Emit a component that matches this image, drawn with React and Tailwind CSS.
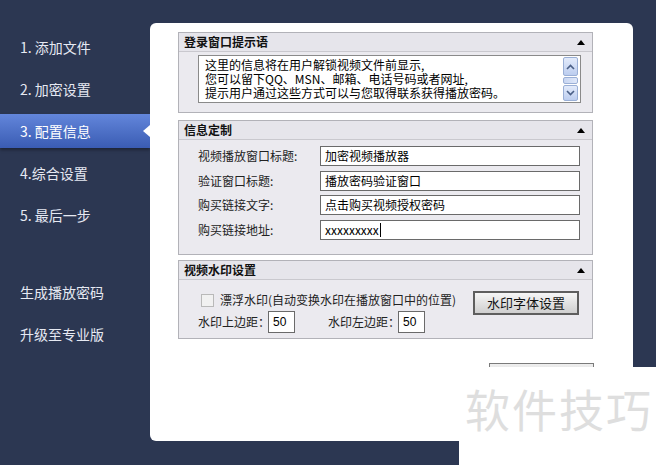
import React from "react";

const font = { fontFamily: '"Noto Sans CJK SC", "Liberation Sans", sans-serif' };

function NavItem({ label, active }) {
  if (active) {
    return (
      <div className="h-[34px] mb-[8px] flex items-center justify-between bg-gradient-to-b from-[#6386db] to-[#3a5cb3] shadow-[0_2px_3px_rgba(0,0,0,0.35)]">
        <span className="pl-[20px] text-[14px] text-white">{label}</span>
        <span className="w-0 h-0 border-y-[6px] border-y-transparent border-r-[7px] border-r-white" />
      </div>
    );
  }
  return (
    <div className="h-[34px] mb-[8px] flex items-center">
      <span className="pl-[20px] text-[14px] text-[#e6e9f2]">{label}</span>
    </div>
  );
}

function Section({ title, children, className = "" }) {
  return (
    <div className={"border border-[#b2b2b8] bg-[#ebeaef] " + className}>
      <div className="h-[19px] flex items-center justify-between px-[5px] bg-[#e6e5eb] border-b border-[#c9c8ce]">
        <span className="text-[12px] font-bold text-[#111]">{title}</span>
        <span className="w-0 h-0 border-x-[4px] border-x-transparent border-b-[5px] border-b-black mr-[2px]" />
      </div>
      {children}
    </div>
  );
}

function Field({ label, value, caret }) {
  return (
    <div className="flex items-center h-[20px]">
      <span className="w-[122px] text-[12px] text-[#222]">{label}</span>
      <div className="w-[260px] h-[20px] border border-[#6a6a6a] bg-white flex items-center pl-[4px] text-[12px] text-black">
        {value}
        {caret && <span className="inline-block w-[1px] h-[14px] bg-black ml-[1px]" />}
      </div>
    </div>
  );
}

function Chevron({ up }) {
  return (
    <svg width="9" height="6" viewBox="0 0 9 6">
      <path d={up ? "M1 5 L4.5 1.5 L8 5" : "M1 1 L4.5 4.5 L8 1"} fill="none" stroke="#4a5f86" strokeWidth="1.6" />
    </svg>
  );
}

export default function App() {
  return (
    <div className="w-[656px] h-[465px] bg-[#2c3752] flex relative overflow-hidden" style={font}>
      <div className="w-[150px] pt-[30px] flex flex-col">
        <NavItem label="1. 添加文件" />
        <NavItem label="2. 加密设置" />
        <NavItem label="3. 配置信息" active />
        <NavItem label="4.综合设置" />
        <NavItem label="5. 最后一步" />
        <div className="h-[35px]" />
        <NavItem label="生成播放密码" />
        <NavItem label="升级至专业版" />
      </div>

      <div className="mt-[23px] w-[483px] h-[418px] bg-white rounded-[6px] pl-[28px] pr-[40px] pt-[9px] flex flex-col">
        <Section title="登录窗口提示语" className="h-[81px]">
          <div className="pl-[19px] pr-[11px] pt-[3px]">
            <div className="h-[48px] border border-[#8a8a8a] bg-white flex">
              <div className="flex-1 pl-[6px] pt-[2px] text-[12px] leading-[14px] text-black">
                <div className="h-[14px]">这里的信息将在用户解锁视频文件前显示,</div>
                <div className="h-[14px]">您可以留下QQ、MSN、邮箱、电话号码或者网址,</div>
                <div className="h-[14px]">提示用户通过这些方式可以与您取得联系获得播放密码。</div>
              </div>
              <div className="w-[17px] flex flex-col items-center py-[1px] mr-[1px]">
                <div className="w-[15px] h-[19px] border border-[#9aafd6] rounded-[2px] bg-gradient-to-b from-[#e3ebfb] to-[#bccdef] flex items-center justify-center">
                  <Chevron up />
                </div>
                <div className="w-[15px] h-[7px] mt-[1px] border border-[#9aafd6] rounded-[2px] bg-gradient-to-r from-[#c8d6f2] to-[#dfe8fa]" />
                <div className="flex-1" />
                <div className="w-[15px] h-[16px] border border-[#9aafd6] rounded-[2px] bg-gradient-to-b from-[#e3ebfb] to-[#bccdef] flex items-center justify-center">
                  <Chevron />
                </div>
              </div>
            </div>
          </div>
        </Section>

        <Section title="信息定制" className="mt-[7px] h-[135px]">
          <div className="pl-[19px] pt-[6px] flex flex-col gap-[4.5px]">
            <Field label="视频播放窗口标题:" value="加密视频播放器" />
            <Field label="验证窗口标题:" value="播放密码验证窗口" />
            <Field label="购买链接文字:" value="点击购买视频授权密码" />
            <Field label="购买链接地址:" value="xxxxxxxxx" caret />
          </div>
        </Section>

        <Section title="视频水印设置" className="mt-[5px] h-[79px]">
          <div className="pl-[19px] pr-[13px] pt-[10px] flex items-start justify-between">
            <div className="flex flex-col">
              <div className="flex items-center h-[20px] pl-[3px]">
                <span className="w-[13px] h-[13px] border border-[#b9b9b9] bg-[#f1f1f1]" />
                <span className="ml-[6px] text-[12px] text-[#222]">漂浮水印(自动变换水印在播放窗口中的位置)</span>
              </div>
              <div className="flex items-center mt-[1px]">
                <span className="text-[12px] text-[#222]">水印上边距：</span>
                <div className="w-[27px] h-[22px] border border-[#6a6a6a] bg-white flex items-center pl-[4px] text-[12px] text-black ml-[-2px]" style={{ fontFamily: '"Liberation Sans", sans-serif' }}>50</div>
                <span className="ml-[33px] text-[12px] text-[#222]">水印左边距：</span>
                <div className="w-[27px] h-[22px] border border-[#6a6a6a] bg-white flex items-center pl-[4px] text-[12px] text-black ml-[-2px]" style={{ fontFamily: '"Liberation Sans", sans-serif' }}>50</div>
              </div>
            </div>
            <div className="w-[106px] h-[24px] border-2 border-[#5e5e5e] bg-gradient-to-b from-[#f6f6f6] to-[#cfcfcf] flex items-center justify-center text-[13px] text-[#111] mt-[1px]">
              水印字体设置
            </div>
          </div>
        </Section>

        <div className="self-end mr-[-1px] mt-[24px] w-[105px] h-[24px] border border-[#7a7a7a] bg-gradient-to-b from-[#eeeeee] to-[#cfcfcf]" />
      </div>

      <div className="absolute left-[459px] top-[367px] w-[197px] h-[98px] bg-white flex items-start">
        <span className="mt-[14px] ml-[6px] text-[45px] leading-[56px] text-[#dedede] tracking-[2px]">软件技巧</span>
      </div>
    </div>
  );
}
